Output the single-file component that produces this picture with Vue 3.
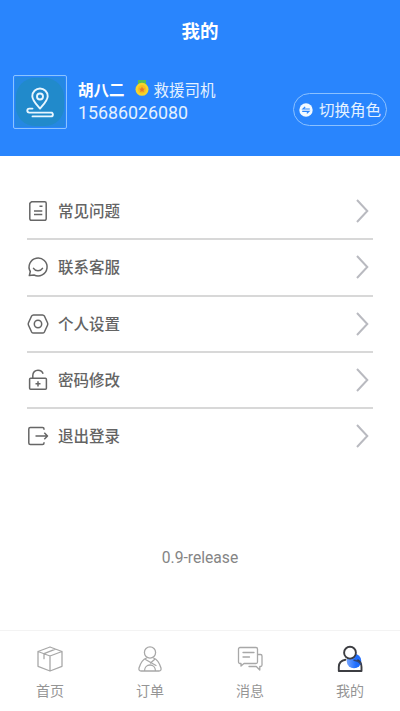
<script setup>
const rows = [
  { id: 'faq', label: '常见问题' },
  { id: 'service', label: '联系客服' },
  { id: 'settings', label: '个人设置' },
  { id: 'password', label: '密码修改' },
  { id: 'logout', label: '退出登录' },
]
const tabs = [
  { id: 'home', label: '首页' },
  { id: 'order', label: '订单' },
  { id: 'message', label: '消息' },
  { id: 'mine', label: '我的' },
]
</script>

<template>
  <div class="page">
    <header class="header">
      <h1 class="title">我的</h1>
      <div class="profile">
        <div class="avatar">
          <svg width="50" height="50" viewBox="0 0 50 50" fill="none" stroke="#e8f6ff" stroke-width="1.9" stroke-linecap="round" stroke-linejoin="round">
            <rect x="0" y="0" width="50" height="50" rx="2" fill="#2588e2" stroke="none" />
            <rect x="1" y="1" width="48" height="48" rx="19" fill="#218acb" stroke="none" />
            <path d="M25 31.500C21.500 27.500 17.300 23.500 17.300 19.200a7.700 7.700 0 0 1 15.400 0C32.700 23.500 28.500 27.500 25 31.500Z" />
            <circle cx="25" cy="19.500" r="3" />
            <path d="M17.500 31.600h-3.200a2 2 0 0 0 0 4H36a1.900 1.900 0 0 1 0 3.800H17.500M16 35.600h21" />
          </svg>
        </div>
        <div class="info">
          <div class="name-line">
            <span class="name">胡八二</span>
            <svg class="medal" width="14" height="18" viewBox="0 0 14 18">
              <path d="M3 1h8v5l-4 2-4-2Z" fill="#55bd58" />
              <circle cx="7" cy="10.300" r="6.500" fill="#f5d52b" />
              <circle cx="7" cy="10.300" r="4.200" fill="#f8bf20" />
              <path d="m7 7.600.9 1.800 2 .3-1.450 1.400.35 2L7 12.150 5.200 13.100l.35-2L4.100 9.700l2-.3Z" fill="#e5792b" />
            </svg>
            <span class="role">救援司机</span>
          </div>
          <div class="phone">15686026080</div>
        </div>
        <button class="switch">
          <svg width="14" height="14" viewBox="0 0 14 14">
            <circle cx="7" cy="7" r="6.700" fill="#f2f9ff" />
            <path d="M10.800 6H4L6.200 3.900M3.200 8.300H10L7.800 10.400" fill="none" stroke="#2985fd" stroke-width="1.200" />
          </svg>
          <span class="switch-label">切换角色</span>
        </button>
      </div>
    </header>

    <main class="menu">
      <div v-for="row in rows" :key="row.id" class="row">
        <svg class="row-icon" width="22" height="22" viewBox="0 0 22 22" fill="none" stroke="#666" stroke-width="1.500" stroke-linejoin="round">
          <template v-if="row.id === 'faq'">
            <path d="M4.500 1.700h13.200a1.500 1.500 0 0 1 1.500 1.500v15.600a1.500 1.500 0 0 1-1.500 1.500H4.300a1.500 1.500 0 0 1-1.500-1.500V3.400Z" />
            <path d="M12.500 6.300h3M7 11h8.300M7 14.500h8.300" />
          </template>
          <template v-else-if="row.id === 'service'">
            <path d="M3.300 15.500A9 9 0 1 1 7 19l-4.700.6Z" />
            <path d="M6.500 12.300c2 3.200 7 3.200 9 0" stroke-linecap="round" />
          </template>
          <template v-else-if="row.id === 'settings'">
            <path d="M6.500 2h9c1 0 1.500.4 2 1.200l3 6.500c.4.900.4 1.700 0 2.600l-3 6.500c-.5.800-1 1.200-2 1.200h-9c-1 0-1.500-.4-2-1.200l-3-6.500c-.4-.9-.4-1.700 0-2.600l3-6.500c.5-.8 1-1.200 2-1.200Z" />
            <circle cx="11" cy="11" r="3.700" />
          </template>
          <template v-else-if="row.id === 'password'">
            <rect x="2.600" y="9.300" width="16.800" height="11" rx="1" />
            <path d="M5.800 9.300V6.500C5.800 3.200 8 1.200 11 1.200c2.600 0 4.400 1.400 5.100 3.500M11 12.200v5.200M8.500 14.800h5" />
          </template>
          <template v-else>
            <path d="M17 4.700V4a1.500 1.500 0 0 0-1.500-1.500H3.300A1.500 1.500 0 0 0 1.800 4v14a1.500 1.500 0 0 0 1.500 1.500h12.200A1.500 1.500 0 0 0 17 18v-.7M8.500 11h12M17.300 7.800l3.200 3.200-3.200 3.200" />
          </template>
        </svg>
        <span class="row-label">{{ row.label }}</span>
        <svg class="chevron" width="14" height="26" viewBox="0 0 14 26" fill="none" stroke="#b9bac0" stroke-width="2">
          <path d="M2 2 12.300 13 2 24" />
        </svg>
      </div>
    </main>

    <div class="version">0.9-release</div>

    <nav class="tabs">
      <div v-for="tab in tabs" :key="tab.id" class="tab">
        <svg width="28" height="28" viewBox="0 0 28 28" fill="none" stroke="#a8a8a8" stroke-width="1.300" stroke-linejoin="round" stroke-linecap="round">
          <template v-if="tab.id === 'home'">
            <path d="m14 2 12 4.500v14.800L14 26 2 21.300V6.500ZM2 6.500 14 11l12-4.500M14 11v15M19.500 4.200 8 8.700v5" />
          </template>
          <template v-else-if="tab.id === 'order'">
            <circle cx="14" cy="7.500" r="5.600" />
            <path d="M10.500 13C6 14.500 4.500 18 3 23c-.3 2 .3 3 2 3h18c1.700 0 2.300-1 2-3-1.500-5-3-8.500-7.500-10M9.500 14.500l10.500 6M18.500 14.500l-4 3.500M8.500 25.800c0-3.500 2.500-5.800 5.500-5.800s5.500 2.300 5.500 5.800" />
          </template>
          <template v-else-if="tab.id === 'message'">
            <path d="M4 2.500h16a1.500 1.500 0 0 1 1.500 1.500v13a1.500 1.500 0 0 1-1.500 1.500H8L5 21v-2.500H4A1.500 1.500 0 0 1 2.500 17V4A1.500 1.500 0 0 1 4 2.500ZM7 7.500h11M7 12h6.500M22 9.500h2.500c1 0 1.500.5 1.500 1.500v9c0 1-.5 1.500-1.500 1.500h-.7V25l-3.500-3.500H13" />
          </template>
          <template v-else>
            <defs>
              <linearGradient id="badge-fade" x1="0" y1="0" x2="1" y2="0">
                <stop offset="0" stop-color="#76a5ff" />
                <stop offset=".65" stop-color="#1f6dfd" />
              </linearGradient>
            </defs>
            <circle cx="18" cy="16" r="7.300" fill="url(#badge-fade)" stroke="none" />
            <g stroke="#3c3d42" stroke-width="1.900">
              <circle cx="14" cy="7.700" r="5.900" fill="#fff" />
              <path d="M9.500 14.700C5.500 15.300 2.800 18 2.800 22v4h22.700v-4c0-3-1-5.500-3.500-6.700" />
            </g>
            <path d="M18 15.200c2.800.5 5.500 1.800 6.800 4" stroke="#30477d" stroke-width="1.400" />
          </template>
        </svg>
        <span>{{ tab.label }}</span>
      </div>
    </nav>
  </div>
</template>

<style>
body { margin: 0; background: #fff; }
</style>

<style scoped>
.page {
  display: flex;
  flex-direction: column;
  width: 400px;
  height: 711px;
  box-sizing: border-box;
  background: #fff;
  font-family: Roboto, "Noto Sans CJK SC", sans-serif;
}
.header {
  height: 156px;
  flex: none;
  background: #2985fd;
  color: #fff;
}
.title {
  margin: 0;
  padding-top: 18px;
  font-size: 18.500px;
  line-height: 28px;
  font-weight: 700;
  text-align: center;
}
.profile {
  display: flex;
  align-items: flex-start;
  padding: 29px 13px 0;
}
.avatar {
  display: flex;
  align-items: center;
  justify-content: center;
  width: 54px;
  height: 54px;
  box-sizing: border-box;
  border: 1px solid #8bc4ff;
  border-radius: 2px;
}
.info { padding: 4px 0 0 11px; }
.name-line {
  display: flex;
  align-items: center;
  height: 24px;
  font-size: 15.500px;
  line-height: 24px;
  color: #e4f1ff;
}
.name { font-weight: 700; color: #fff; }
.medal { margin: -7px 5px 0 10px; }
.phone {
  font-size: 17.800px;
  line-height: 20px;
  color: #e4f1ff;
}
.switch {
  display: flex;
  align-items: center;
  justify-content: center;
  gap: 6px;
  width: 94px;
  height: 33px;
  margin: 18px 0 0 auto;
  padding: 0;
  box-sizing: border-box;
  border: 1px solid #8bc1ff;
  border-radius: 17px;
  background: transparent;
  color: #e4f1ff;
  font-family: inherit;
  font-size: 15.500px;
  line-height: 22px;
}
.switch-label { padding-top: 2px; }
.menu {
  margin: 28px 13px 0;
  padding: 0 14px;
}
.row {
  display: flex;
  align-items: center;
  height: 56.250px;
  box-sizing: border-box;
  border-bottom: 2px solid #d8d8d8;
}
.row:last-child { border-bottom-color: transparent; }
.row-label {
  padding: 2px 0 0 9px;
  font-size: 15.500px;
  line-height: 24px;
  font-weight: 500;
  color: #646464;
}
.chevron { margin: 0 4px 0 auto; }
.version {
  margin-top: 81px;
  font-size: 15.650px;
  line-height: 24px;
  text-align: center;
  color: #858585;
}
.tabs {
  display: flex;
  height: 81px;
  margin-top: auto;
  box-sizing: border-box;
  border-top: 1px solid #f3f3f3;
}
.tab {
  display: flex;
  flex: 1;
  flex-direction: column;
  align-items: center;
  padding-top: 14px;
  gap: 8px;
  font-size: 14px;
  line-height: 20px;
  color: #959595;
}
</style>
